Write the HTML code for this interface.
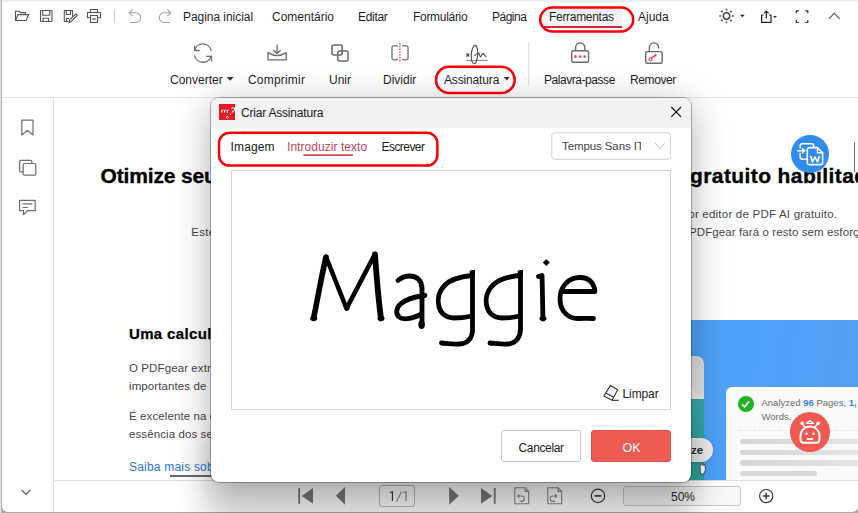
<!DOCTYPE html>
<html><head><meta charset="utf-8">
<style>
*{box-sizing:border-box;margin:0;padding:0}
html,body{width:858px;height:513px;overflow:hidden;background:#a9a9a9;font-family:"Liberation Sans",sans-serif;color:#1f1f1f}
.a{position:absolute}
.t{position:absolute;white-space:nowrap;line-height:1;font-size:12px}
svg{position:absolute;left:0;top:0;overflow:visible}
</style></head><body>
<!-- frame -->
<div class="a" style="left:2px;top:2px;width:856px;height:510px;background:#fff;border-radius:0 0 6px 6px"></div>
<div class="a" style="left:0;top:0;width:858px;height:2px;background:#efefef"></div>
<div class="a" style="left:0;top:0;width:1px;height:513px;background:#dce3e7"></div>
<div class="a" style="left:1px;top:0;width:1px;height:513px;background:#b1b5b8"></div>

<!-- MENU BAR -->
<div class="a" style="left:542px;top:9px;width:80px;height:18px;background:#f3f3f3"></div>
<div class="a" style="left:542px;top:26px;width:80px;height:1.6px;background:#d02a36"></div>
<div class="t" style="left:183px;top:11px;letter-spacing:-0.05px">Pagina inicial</div>
<div class="t" style="left:272px;top:11px">Comentário</div>
<div class="t" style="left:358px;top:11px;letter-spacing:-0.3px">Editar</div>
<div class="t" style="left:413px;top:11px;letter-spacing:-0.3px">Formulário</div>
<div class="t" style="left:492px;top:11px;letter-spacing:-0.5px">Página</div>
<div class="t" style="left:549px;top:11px;letter-spacing:-0.3px">Ferramentas</div>
<div class="t" style="left:638px;top:11px">Ajuda</div>

<svg width="858" height="513" fill="none" stroke="#555" stroke-width="1.1">
  <!-- folder -->
  <path d="M15.5 20.5V11.3H19.3L20.6 12.6H25.5V14.6"/>
  <path d="M15.5 20.5L18 14.6H28.8L26 20.5Z"/>
  <!-- save -->
  <rect x="40.5" y="10.5" width="11.5" height="11" rx="0.5"/>
  <path d="M42.7 10.5V15.2H49.8V10.5"/>
  <path d="M43 21.5V18.3H48.5V21.5"/>
  <!-- save edit -->
  <path d="M72.5 16.3V10.5H64.3V21.5H68.3"/>
  <path d="M66.3 10.5V14.5H70.5V10.5"/>
  <path d="M66.5 21.5V18.5H69"/>
  <path d="M69 22.5L69.7 19.8L75.7 14L77.2 15.5L71.2 21.5Z"/>
  <!-- print -->
  <path d="M90.5 12.3V9.5H97.5V12.3"/>
  <path d="M90.3 17.8H87.5V12.5H100.5V17.8H97.7"/>
  <rect x="90.5" y="15.5" width="7" height="7"/>
  <path d="M92.3 19H95.7" stroke-width="1.4"/>
  <!-- separator -->
  <path d="M114.5 9V22.5" stroke="#cfcfcf"/>
  <!-- undo -->
  <g stroke="#a3a3a3">
  <path d="M132.6 9.3L129.2 12.8L132.6 16.2"/>
  <path d="M129.5 12.8H135.7A4.85 4.85 0 0 1 135.7 22.5H129.7"/>
  <!-- redo -->
  <path d="M167.3 9.3L170.7 12.8L167.3 16.2"/>
  <path d="M170.4 12.8H164.2A4.85 4.85 0 0 0 164.2 22.5H170.2"/>
  </g>
  <!-- sun -->
  <g stroke="#4a4a4a">
  <circle cx="726.5" cy="16" r="3.2" stroke-width="1.5"/>
  <path d="M726.5 8.8V10.6M726.5 21.4V23.2M719.3 16H721.1M731.9 16H733.7M721.4 10.9L722.6 12.1M730.4 19.9L731.6 21.1M721.4 21.1L722.6 19.9M730.4 12.1L731.6 10.9" stroke-width="1.6"/>
  </g>
  <path d="M740 14.8H744.7L742.35 17.2Z" fill="#222" stroke="none"/>
  <!-- share -->
  <g stroke="#222" stroke-width="1.2">
  <path d="M763.6 15H761.6V22.3H771V15H769"/>
  <path d="M766.3 18.5V11M764 13.3L766.3 11L768.6 13.3"/>
  </g>
  <path d="M773 16H777L775 18Z" fill="#333" stroke="none"/>
  <!-- fullscreen -->
  <path d="M796.3 13.3V10.8H798.8M805.3 10.8H807.8V13.3M807.8 20V22.5H805.3M798.8 22.5H796.3V20" stroke="#333" stroke-width="1.2"/>
  <!-- chevron up -->
  <path d="M828.8 18.8L834.2 13.4L839.6 18.8" stroke="#555" stroke-width="1.1"/>
  <!-- red outline on Ferramentas -->
  <rect x="540.2" y="7.5" width="93" height="24" rx="12" stroke="#fb0007" stroke-width="2.5"/>
</svg>

<!-- TOOLBAR -->
<div class="a" style="left:2px;top:97px;width:856px;height:1px;background:#e3e3e3"></div>
<div class="t" style="left:170px;top:74px;letter-spacing:0px">Converter</div>
<div class="t" style="left:248px;top:74px;letter-spacing:0.2px">Comprimir</div>
<div class="t" style="left:329px;top:74px">Unir</div>
<div class="t" style="left:383px;top:74px">Dividir</div>
<div class="t" style="left:444px;top:74px;letter-spacing:-0.15px">Assinatura</div>
<div class="t" style="left:544px;top:74px;letter-spacing:-0.45px">Palavra-passe</div>
<div class="t" style="left:630px;top:74px;letter-spacing:-0.4px">Remover</div>
<svg width="858" height="513" fill="none" stroke="#6b6b6b" stroke-width="1.3">
  <path d="M226.7 77H233.7L230.2 80.8Z" fill="#333" stroke="none"/>
  <path d="M503.8 77H509.7L506.75 80.5Z" fill="#333" stroke="none"/>
  <!-- convert -->
  <path d="M194.5 50.5A8.6 8.6 0 0 1 211.3 50.8"/>
  <path d="M194.7 45.4V50.5H199.6"/>
  <path d="M211.3 55.6A8.6 8.6 0 0 1 194.5 55.4"/>
  <path d="M206.3 56.3H211.5V61.5"/>
  <!-- compress -->
  <path d="M277.1 44.7V53.6M273.6 50.2L277.1 53.7L280.6 50.2"/>
  <path d="M268 52.6Q277.1 58.5 286.2 52.6V59.9H268Z" stroke-linejoin="round"/>
  <!-- unir -->
  <rect x="332" y="45" width="10.2" height="10" rx="2" stroke-width="1.6"/>
  <rect x="337.8" y="51" width="10.2" height="10" rx="2" stroke-width="1.6"/>
  <!-- dividir -->
  <path d="M398 45.8H394A2 2 0 0 0 392 47.8V57.8A2 2 0 0 0 394 59.8H398M402 45.8H406A2 2 0 0 1 408 47.8V57.8A2 2 0 0 1 406 59.8H402" stroke-width="1.5" stroke="#858585"/>
  <path d="M399.9 43V62.3" stroke="#f03a50" stroke-width="1.3" stroke-dasharray="1.5 1.3"/>
  <!-- signature -->
  <g stroke="#4a4a4a" stroke-width="1.1">
  <path d="M466.3 53.3L469.4 56.5M469.4 53.3L466.3 56.5"/>
  <path d="M466.2 60.4H487.7" stroke="#8a8a8a" stroke-width="1.1"/>
  <ellipse cx="474.5" cy="54.6" rx="3.2" ry="9.2" transform="rotate(4 474.5 54.6)"/>
  <path d="M474.5 55.8Q477 53 479 53.3Q479.5 56.5 480.7 57Q482 53.5 483.5 53.6Q485 56.5 486.5 57"/>
  </g>
  <!-- separator -->
  <path d="M528.7 42.5V85" stroke="#dcdcdc" stroke-width="1"/>
  <!-- lock -->
  <path d="M575.6 50.6V47.6A4.6 4.6 0 0 1 584.8 47.6V50.6" stroke-width="1.4"/>
  <rect x="571.7" y="50.8" width="16.9" height="11.5" rx="1.5" stroke-width="1.4"/>
  <path d="M575.50 55.10L575.50 58.10M574.20 55.85L576.80 57.35M574.20 57.35L576.80 55.85M580.10 55.10L580.10 58.10M578.80 55.85L581.40 57.35M578.80 57.35L581.40 55.85M584.70 55.10L584.70 58.10M583.40 55.85L586.00 57.35M583.40 57.35L586.00 55.85" stroke="#f03a50" stroke-width="0.9"/>
  <!-- unlock -->
  <path d="M649.4 51.5V47.5A4.6 4.6 0 0 1 658.6 47.5V48.5" stroke-width="1.4"/>
  <rect x="645.7" y="51.6" width="16.5" height="11.6" rx="1.5" stroke-width="1.4"/>
  <path d="M651.6 58L656.3 54.2M654 56.1L655.3 57.4M655.4 55L656.6 56.2" stroke="#f03a50" stroke-width="1.2"/>
  <circle cx="650.5" cy="59.2" r="1.5" stroke="#f03a50" stroke-width="1.1"/>
  <!-- red outline on Assinatura -->
  <rect x="436" y="66.8" width="78.6" height="26.2" rx="13.1" stroke="#fb0007" stroke-width="2.6"/>
</svg>

<!-- SIDEBAR -->
<div class="a" style="left:53px;top:98px;width:1px;height:414px;background:#e0e0e0"></div>
<svg width="858" height="513" fill="none" stroke="#6e6e6e" stroke-width="1.2">
  <path d="M21.8 120.2H33V135L27.4 130.4L21.8 135Z" stroke-linejoin="round"/>
  <rect x="19.6" y="160.3" width="12.2" height="11.6" rx="1.2"/>
  <rect x="23.2" y="163.5" width="12.6" height="11.7" rx="1.2" fill="#fff"/>
  <path d="M19.6 200.3H35.2V210.7H27.5L23.5 214.6V210.7H19.6Z" stroke-linejoin="round"/>
  <path d="M22.6 203.9H32.4M22.6 207.5H28.2"/>
  <path d="M21.5 489.8L26 494.3L30.5 489.8" stroke="#555"/>
</svg>

<!-- BOTTOM BAR -->
<div class="a" style="left:54px;top:480px;width:804px;height:1px;background:#dedede"></div>

<!-- DOC CONTENT -->
<div class="t" style="left:100.5px;top:165px;font-size:21px;font-weight:700;color:#000;letter-spacing:-0.15px;-webkit-text-stroke:0.35px #000">Otimize seu editor</div>
<div class="t" style="left:690px;top:165px;font-size:21px;font-weight:700;color:#000;letter-spacing:0.4px;-webkit-text-stroke:0.35px #000">gratuito habilitado</div>
<div class="t" style="left:191.3px;top:227px;font-size:11.5px;color:#464646;letter-spacing:0.25px">Este editor de PDF</div>
<div class="t" style="right:20.8px;top:209px;font-size:11.5px;color:#464646;letter-spacing:0.22px">por editor de PDF AI gratuito.</div>
<div class="t" style="left:689px;top:227px;font-size:11.5px;color:#464646;letter-spacing:0.1px">PDFgear fará o resto sem esforço</div>
<div class="t" style="left:129px;top:326.3px;font-size:15px;font-weight:700;color:#000;letter-spacing:0.35px;-webkit-text-stroke:0.25px #000">Uma calculadora</div>
<div class="t" style="left:129px;top:363px;font-size:11.5px;color:#464646;letter-spacing:0.1px">O PDFgear extrai</div>
<div class="t" style="left:129px;top:380.5px;font-size:11.5px;color:#464646;letter-spacing:0.1px">importantes de</div>
<div class="t" style="left:129px;top:410.6px;font-size:11.5px;color:#464646;letter-spacing:0.1px">É excelente na cap</div>
<div class="t" style="left:129px;top:428.5px;font-size:11.5px;color:#464646;letter-spacing:0.1px">essência dos seus</div>
<div class="t" style="left:129px;top:460.5px;font-size:12px;color:#2b78d8;letter-spacing:0.2px">Saiba mais sobre</div>
<div class="a" style="left:170px;top:475px;width:42px;height:2px;background:#6a6a6a"></div>
<div class="a" style="left:853.5px;top:142px;width:1.2px;height:30px;background:#707070"></div>

<!-- blue image -->
<div class="a" style="left:440px;top:320px;width:418px;height:160px;background:linear-gradient(100deg,#4399f2 0%,#4ea2f9 65%,#579ff6 100%);overflow:hidden">
  <div class="a" style="left:240px;top:35.8px;width:23.6px;height:130px;border-radius:0 8px 0 0;background:linear-gradient(180deg,#dedede 0%,#e4e4e4 30%,#e2e2e2 33.2%,#3aaaa5 33.4%,#2fa39f 100%)"></div>
  <svg width="300" height="200"><path d="M251 68L263.6 79H251Z" fill="#efefef"/></svg>
  <div class="a" style="left:200px;top:118px;width:72.6px;height:23.6px;border-radius:12px;background:linear-gradient(90deg,#e6e6e6,#f4f4f4);box-shadow:0 1px 3px rgba(0,0,0,.2)"></div>
  <div class="t" style="left:251px;top:124.5px;font-size:11.5px;font-weight:700;color:#2a2a2a">ze</div>
  <div class="a" style="left:286px;top:66.5px;width:150px;height:110px;border-radius:6px;background:#fafafa"></div>
  <div class="a" style="left:297.6px;top:76px;width:16px;height:16px;border-radius:50%;background:#1db421"></div>
  <svg width="100" height="100"><path d="M302 84.3L304.6 86.8L309.2 81.3" stroke="#fff" stroke-width="1.8" fill="none"/></svg>
  <div class="t" style="left:321.5px;top:77.5px;font-size:9.5px;color:#6b6b6b">Analyzed <b style="color:#3a86f0">96</b> Pages, <b style="color:#3a86f0">1,</b></div>
  <div class="t" style="left:321.5px;top:91.5px;font-size:9.5px;color:#6b6b6b">Words.</div>
  <div class="a" style="left:297.6px;top:110px;width:130px;height:0;border-top:1px dashed #e6e6e6"></div>
  <div class="a" style="left:300px;top:118.5px;width:130px;height:5.5px;border-radius:3px;background:linear-gradient(90deg,#d6d6d6,#e6e6e6)"></div>
  <div class="a" style="left:300px;top:129.7px;width:130px;height:5.5px;border-radius:3px;background:linear-gradient(90deg,#d6d6d6,#e6e6e6)"></div>
  <div class="a" style="left:300px;top:140.2px;width:130px;height:5.5px;border-radius:3px;background:linear-gradient(90deg,#d6d6d6,#e6e6e6)"></div>
  <div class="a" style="left:300px;top:150.7px;width:77px;height:5.5px;border-radius:3px;background:#d9d9d9"></div>
  <div class="a" style="left:350px;top:92.2px;width:40px;height:40px;border-radius:50%;background:#ee5951"></div>
</div>
<svg width="858" height="513"><path d="M700.5 474L700 466.5L701.8 463.5L703.2 465.5L704.8 464.5L705.5 470L703.5 474Z" fill="#fff" stroke="#333" stroke-width="0.8"/></svg>
<!-- robot icon -->
<svg width="858" height="513" fill="none" stroke="#fff" stroke-width="2">
  <path d="M803.5 442.8C801.2 442.8 800.5 441.5 800.5 439V435.5A9.5 9 0 0 1 819.5 435.5V439C819.5 441.5 818.8 442.8 816.5 442.8Z" stroke-linejoin="round"/>
  <path d="M802.3 423.5L805 427.5M817.7 423.5L815 427.5" stroke-width="1.5"/>
  <path d="M806.5 423.3L808.3 421.8L810 420.6L811.7 421.8L813.5 423.3Z" stroke-width="1.3" stroke-linejoin="round"/>
  <circle cx="802.2" cy="423.2" r="1.8" fill="#fff" stroke="none"/><circle cx="818.2" cy="423.2" r="1.8" fill="#fff" stroke="none"/>
  <circle cx="806.5" cy="433.7" r="1.2" fill="#fff" stroke="none"/><circle cx="813.5" cy="433.7" r="1.2" fill="#fff" stroke="none"/>
  <path d="M807.6 439H812.4" stroke-width="1.8" stroke-linecap="round"/>
</svg>
<!-- blue word icon -->
<div class="a" style="left:791px;top:135px;width:38px;height:38px;border-radius:50%;background:#2f8de9"></div>
<svg width="858" height="513" fill="none" stroke="#fff" stroke-width="1.6">
  <path d="M813.6 147V145.6A1.9 1.9 0 0 0 811.7 143.7H802.1A1.9 1.9 0 0 0 800.2 145.6V148.6M800.2 153V157.3A1.9 1.9 0 0 0 802.1 159.2H806.8"/>
  <path d="M797.2 150.8H804.2M802 148.4L804.6 150.8L802 153.2" stroke-width="1.5"/>
  <path d="M809.2 147.6H817.4L822.6 152.8V162.7A1.9 1.9 0 0 1 820.7 164.6H809.2A1.9 1.9 0 0 1 807.3 162.7V149.5A1.9 1.9 0 0 1 809.2 147.6Z" fill="#2f8de9" stroke-linejoin="round"/>
  <path d="M817.4 147.6V152.8H822.6" stroke-width="1.4"/>
  <path d="M810.6 156L812.4 161.8L815 157.2L817.6 161.8L819.4 156" stroke-width="1.7" stroke-linejoin="round"/>
</svg>

<!-- BOTTOM BAR ICONS -->
<svg width="858" height="513" stroke="none" fill="#7a7a7a">
  <rect x="298.3" y="488" width="1.8" height="15.8"/>
  <path d="M313 488V503.8L301.7 495.9Z"/>
  <path d="M345 487V504.7L335.8 495.85Z"/>
  <path d="M449.2 487V504.7L458.8 495.85Z"/>
  <path d="M481 488V503.8L492.3 495.9Z"/>
  <rect x="493.8" y="488" width="1.8" height="15.8"/>
  <g fill="none" stroke="#8a8a8a" stroke-width="1.1">
    <path d="M514.8 487.7H525L528.7 491.4V503.8H514.8Z" stroke-linejoin="round"/>
    <path d="M525 487.7V491.4H528.7"/>
    <path d="M519.3 494.3L517.6 496L519.3 497.7M517.8 496H521.6A2.7 2.7 0 0 1 521.6 501.4H519.5"/>
    <path d="M547.8 487.7H558L561.7 491.4V503.8H547.8Z" stroke-linejoin="round"/>
    <path d="M558 487.7V491.4H561.7"/>
    <path d="M555.2 494.3L556.9 496L555.2 497.7M556.7 496H552.9A2.7 2.7 0 0 0 552.9 501.4H555"/>
  </g>
  <g fill="none" stroke="#3a3a3a" stroke-width="1.2">
    <circle cx="598" cy="495.9" r="6.7"/>
    <path d="M594.6 495.9H601.4" stroke-width="1.6"/>
    <circle cx="766.2" cy="496.1" r="6.6"/>
    <path d="M762.8 496.1H769.6M766.2 492.7V499.5" stroke-width="1.5"/>
  </g>
</svg>
<div class="a" style="left:379px;top:485px;width:36px;height:21.5px;border:1px solid #b8b8b8;border-radius:3px"></div>
<svg width="858" height="513" fill="none" stroke-width="1.15"><path d="M389.8 492.8L392.4 491.8V501" stroke="#3a3a3a"/><path d="M401.6 491.6L396.6 501.5" stroke="#8a8a8a" stroke-width="1.1"/><path d="M403.6 492.8L406 491.8V501" stroke="#888"/></svg>
<div class="a" style="left:622.7px;top:485.5px;width:118.6px;height:20.8px;border:1px solid #c8c8c8;border-radius:3px;background:rgba(0,0,0,0.03)"></div>
<div class="t" style="left:671px;top:490.5px;font-size:12px;color:#2a2a2a">50%</div>

<!-- DIALOG -->
<div class="a" style="left:205px;top:440px;width:491px;height:110px;background:rgba(0,0,0,0.12);filter:blur(14px)"></div>
<div class="a" style="left:210.5px;top:97.5px;width:480.5px;height:384.5px;border-radius:8px;background:#fff;box-shadow:0 8px 36px rgba(0,0,0,0.32),0 0 0 1px rgba(0,0,0,0.28);overflow:hidden">
  <div class="a" style="left:0;top:0;width:481px;height:30px;background:#f3f1f2"></div>
</div>
<svg width="858" height="513" fill="none">
  <rect x="219" y="104" width="16" height="16" fill="#e31b23"/>
  <path d="M221.7 112.8V110.2M221.7 110.6L223.3 110.1M224.6 112.8V110.2M224.6 110.6L226.2 110.1M227.3 112.8V110.2M227.3 110.6L229 110.1M231.4 108.3Q233.6 107 234.9 108.6Q234.7 111 232.6 111.4L231.9 112.6" stroke="#fff" stroke-width="1.05"/>
  <circle cx="230.4" cy="114.3" r="0.75" fill="#fff"/>
  <path d="M227.4 116.1L228.6 117.3L227.4 118.5L226.2 117.3Z" stroke="#fff" stroke-width="0.8"/>
  <path d="M671.3 107L681 116.8M681 107L671.3 116.8" stroke="#111" stroke-width="1.2"/>
  <rect x="219" y="132.8" width="218.4" height="32.8" rx="10.5" stroke="#fb0007" stroke-width="2.5"/>
  <rect x="551.8" y="132.8" width="118.6" height="26.5" rx="2.5" stroke="#d2d2d2" stroke-width="1"/>
  <path d="M655 143L659.8 148.4L664.6 143" stroke="#c2c2c2" stroke-width="1"/>
  <rect x="231.5" y="170.5" width="439" height="239" stroke="#d4d4d4" stroke-width="1"/>
  <rect x="303.4" y="154.3" width="49.5" height="1.6" fill="#c43c4b"/>
  <!-- eraser -->
  <path d="M610.6 385.4L617.7 389.7L612 400.2L603.8 396Z M605.6 392.9L614 397.3" stroke="#333" stroke-width="1.15" stroke-linejoin="round"/>
  <path d="M612 400.3H618.8" stroke="#333" stroke-width="1.15"/>
</svg>
<div class="t" style="left:241px;top:106.6px;font-size:12px;color:#1a1a1a;letter-spacing:-0.2px">Criar Assinatura</div>
<div class="t" style="left:230.5px;top:141.4px;font-size:12px;color:#1a1a1a;letter-spacing:0.15px">Imagem</div>
<div class="t" style="left:287px;top:141.4px;font-size:12px;color:#c9455a;letter-spacing:0.05px">Introduzir texto</div>
<div class="t" style="left:381.5px;top:141.4px;font-size:12px;color:#1a1a1a;letter-spacing:-0.55px">Escrever</div>
<div class="t" style="left:562px;top:140.5px;font-size:11.5px;color:#444;letter-spacing:-0.1px;width:79px;overflow:hidden">Tempus Sans ITC</div>
<div class="t" style="left:622.5px;top:388px;font-size:12px;color:#1a1a1a;letter-spacing:-0.1px">Limpar</div>
<div class="a" style="left:501px;top:430px;width:80px;height:32px;border:1px solid #c6c6c6;border-radius:3px;background:#fff"></div>
<div class="t" style="left:518.5px;top:441.8px;font-size:12px;color:#1a1a1a;letter-spacing:-0.35px">Cancelar</div>
<div class="a" style="left:591px;top:430px;width:80px;height:32px;border-radius:3px;background:#ef5a53;border:1px solid #e0524b"></div>
<div class="t" style="left:622.5px;top:441.7px;font-size:12.5px;color:#fff">OK</div>

<!-- SIGNATURE -->
<svg width="858" height="513" fill="none" stroke="#000" stroke-width="4" stroke-linecap="round" stroke-linejoin="round">
  <path d="M313.5 318.5C317.5 300 321.5 276 326 257" stroke-width="5.6"/>
  <path d="M326.5 258L346.5 308.5L374.5 255" stroke-width="4.6"/>
  <path d="M375 254.5C376.5 276 378.5 300 381 318.5" stroke-width="5.8"/>
  <path d="M398 280.5C401.5 277.3 405 276 409.5 276C417 276 422 280 422 289V322" stroke-width="4.8"/>
  <path d="M425 295.5C416 296.5 406 299 400.5 304C396 308 395.5 313.5 399 317C402.5 320 411 319.5 421.5 314" stroke-width="4.8"/>
  <path d="M471.5 275.5C462 276.5 451 279 445 285C438.5 291.5 437 300 439 307C441 314 447 318 454 318C460 318 465 317.5 469.5 316.5" stroke-width="4.8"/>
  <path d="M472.5 272.5V330C472.5 338 467.5 343.5 459.5 344C453 344.5 447 343.5 441.5 343" stroke-width="4.8"/>
  <path d="M519.5 275.5C510 276.5 499 279 493 285C486.5 291.5 485 300 487 307C489 314 495 318 502 318C508 318 513 317.5 517.5 316.5" stroke-width="4.8"/>
  <path d="M520.5 272.5V329C520.5 337 516 343.5 508 344C501.5 344.5 496 343.5 490 343" stroke-width="4.8"/>
  <path d="M538.5 276.5L542 275.5C542.5 290 542.5 305 543 319" stroke-width="4.8"/>
  <path d="M561 291.5H595C594 283 589 277.5 580 277.5C568 277.5 560 287 560 299C560 312 569 318.5 578 318.5C584 318.5 589 318 593.5 318.5" stroke-width="4.8"/>
</svg>
<svg width="858" height="513" fill="#000">
  <path d="M546.3 259.2L549.8 262.6L546.3 266L542.8 262.6Z"/>
  <path d="M469.6 271L475 269.8L474.6 276L469.8 276.5Z"/><path d="M517.6 271L523 269.8L522.6 276L517.8 276.5Z"/>
  <ellipse cx="543" cy="318.5" rx="3.5" ry="2.3"/>
  <ellipse cx="421.6" cy="324.6" rx="3.3" ry="4.4"/>
  <ellipse cx="313.8" cy="318.5" rx="3.5" ry="2.4"/>
  <ellipse cx="381" cy="318.5" rx="3.5" ry="2.4"/>
  <ellipse cx="347" cy="308" rx="2.5" ry="2.5"/>
  <ellipse cx="442" cy="343" rx="2.5" ry="2.3"/>
  <ellipse cx="490.5" cy="343" rx="2.5" ry="2.3"/>
</svg>
</body></html>
